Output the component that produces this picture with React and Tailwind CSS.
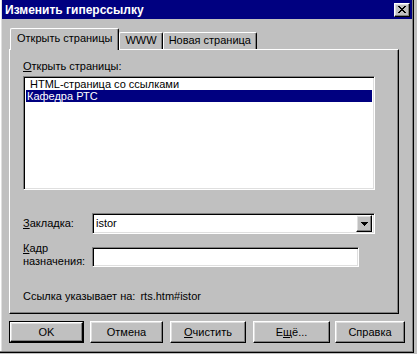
import React from "react";

const raised =
  "border border-t-white border-l-white border-r-black border-b-black shadow-[inset_-1px_-1px_0_#808080,inset_1px_1px_0_#dfdfdf]";
const sunken =
  "border border-t-[#808080] border-l-[#808080] border-r-white border-b-white shadow-[inset_1px_1px_0_#000,inset_-1px_-1px_0_#dfdfdf]";

function Btn({ children, className = "", isDefault = false }) {
  if (isDefault) {
    return (
      <div className={`h-[22px] border border-black ${className}`}>
        <div className={`h-full w-full flex items-center justify-center ${raised}`}>{children}</div>
      </div>
    );
  }
  return (
    <div className={`h-[22px] flex items-center justify-center ${raised} ${className}`}>{children}</div>
  );
}

function Tab({ children, active = false }) {
  if (active) {
    return (
      <div className="relative z-10 h-[22px] -mb-[1px] px-[6px] pt-[3px] bg-[#c0c0c0] border-l border-t border-t-white border-l-white border-r border-r-black shadow-[inset_-1px_0_0_#808080] rounded-tl-[2px] rounded-tr-[2px]">
        {children}
      </div>
    );
  }
  return (
    <div className="h-[17px] px-[5px] pt-[1px] border-l border-t border-t-white border-l-white border-r border-r-black shadow-[inset_-1px_0_0_#808080] rounded-tl-[2px] rounded-tr-[2px]">
      {children}
    </div>
  );
}

export default function App() {
  return (
    <div
      className="w-[417px] h-[354px] bg-[#c0c0c0] overflow-hidden text-[11px] leading-[13px] text-black"
      style={{ fontFamily: '"Liberation Sans", Arial, sans-serif' }}
    >
      <div className="w-[414px] h-[353px] border-r border-b border-r-black border-b-black shadow-[inset_-1px_-1px_0_#808080,inset_1px_0_0_#fff,inset_2px_0_0_#dfdfdf]">
        {/* Title bar */}
        <div className="h-[19px] ml-[2px] mr-[1px] bg-[#000080] flex items-center justify-between pl-[3px] pr-[2px]">
          <span className="text-white font-bold text-[12px] leading-[14px]">Изменить гиперссылку</span>
          <div className={`w-[16px] h-[14px] bg-[#c0c0c0] flex items-center justify-center ${raised}`}>
            <svg width="8" height="7" viewBox="0 0 8 7">
              <path d="M0 0h2v1h1v1h2V1h1V0h2v1H7v1H6v1H5v1h1v1h1v1h1v1H6V6H5V5H3v1H2v1H0V6h1V5h1V4h1V3H2V2H1V1H0z" fill="#000" />
            </svg>
          </div>
        </div>

        {/* Tabs */}
        <div className="mt-[9px] ml-[9px] pl-[1px] flex items-end h-[21px]">
          <Tab active>Открыть страницы</Tab>
          <Tab>WWW</Tab>
          <Tab>Новая страница</Tab>
        </div>

        {/* Panel */}
        <div className="ml-[9px] w-[390px] h-[265px] border border-t-white border-l-white border-r-black border-b-black shadow-[inset_-1px_-1px_0_#808080] pt-[10px] pl-[13px]">
          <div>
            <span className="underline">О</span>ткрыть страницы:
          </div>
          <div className={`mt-[3px] w-[352px] h-[114px] bg-white ${sunken} pt-[1px] pl-[2px] pr-[2px]`}>
            <div className="h-[12px] leading-[12px] pl-[4px]">HTML-страница со ссылками</div>
            <div className="h-[12px] leading-[12px] pl-[1px] bg-[#000080] text-white">Кафедра РТС</div>
          </div>

          <div className="mt-[23px] flex items-center">
            <div className="w-[69px]">
              <span className="underline">З</span>акладка:
            </div>
            <div className={`w-[283px] h-[21px] bg-white ${sunken} flex items-center justify-between pl-[3px] pr-[2px]`}>
              <span>istor</span>
              <div className={`w-[16px] h-[17px] bg-[#c0c0c0] flex items-center justify-center ${raised}`}>
                <svg width="7" height="4" viewBox="0 0 7 4">
                  <path d="M0 0h7v1H6v1H5v1H4v1H3V3H2V2H1V1H0z" fill="#000" />
                </svg>
              </div>
            </div>
          </div>

          <div className="mt-[8px] flex items-end">
            <div className="w-[69px]">
              <div>
                <span className="underline">К</span>адр
              </div>
              <div>назначения:</div>
            </div>
            <div className={`w-[267px] h-[20px] mb-[1px] bg-white ${sunken}`} />
          </div>

          <div className="mt-[22px]">
            Ссылка указывает на:<span className="ml-[5px]">rts.htm#istor</span>
          </div>
        </div>

        {/* Buttons */}
        <div className="mt-[7px] flex">
          <Btn isDefault className="ml-[9px] w-[75px]">OK</Btn>
          <Btn className="ml-[6px] w-[73px]">Отмена</Btn>
          <Btn className="ml-[7px] w-[76px]">
            <span>
              <span className="underline">О</span>чистить
            </span>
          </Btn>
          <Btn className="ml-[7px] w-[77px]">
            <span>
              Е<span className="underline">щ</span>ё...
            </span>
          </Btn>
          <Btn className="ml-[5px] w-[70px]">Справка</Btn>
        </div>
      </div>
    </div>
  );
}
